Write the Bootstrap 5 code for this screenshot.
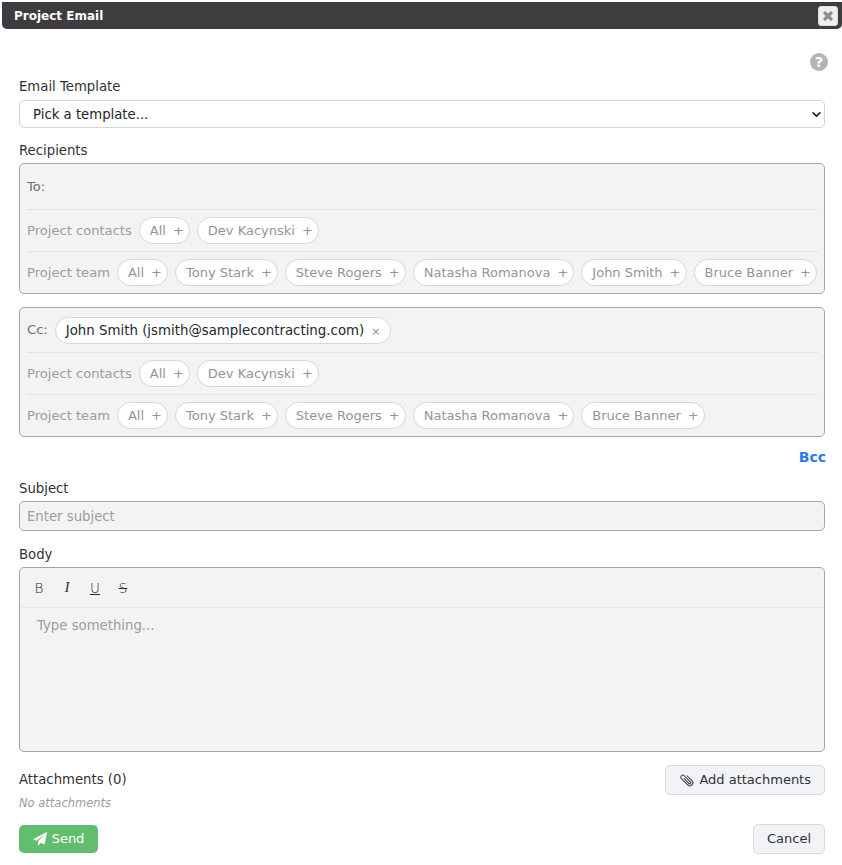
<!DOCTYPE html>
<html lang="en">
<head>
  <meta charset="UTF-8" />
  <title>Project Email</title>
  <link href="https://cdn.jsdelivr.net/npm/bootstrap@5.3.3/dist/css/bootstrap.min.css" rel="stylesheet" />
  <style>
    body {
      font-family: "DejaVu Sans", Verdana, sans-serif;
      font-size: 13.25px;
      color: #2f3136;
      background: #fff;
      overflow: hidden;
    }
    .title-bar {
      margin: 2px 0 0 2px;
      height: 27px;
      padding: 0 4px 0 12px;
      background: #3e3c3f;
      color: #fff;
      font-size: 12px;
      font-weight: 700;
      border-radius: 0 0 5px 5px;
    }
    .close-btn {
      width: 20px;
      height: 20px;
      padding: 0;
      border: 1px solid #ddd;
      border-radius: 3px;
      background: #eeeeee;
      line-height: 1;
    }
    .dialog-body { padding: 24px 17px 0 19px; }
    .help-icon {
      width: 18px;
      height: 18px;
      margin-right: -3px;
      border-radius: 50%;
      background: #b4b4b4;
      color: #fff;
      font-size: 14px;
      font-weight: 700;
      line-height: 18px;
      text-align: center;
    }
    .field-label { margin: 0 0 5px; padding-top: 1px; line-height: 16px; color: #2f3136; }
    .field-label-low { margin-bottom: 4px; padding-top: 2px; }
    .template-select {
      height: 28px;
      padding: 2px 30px 0 13px;
      font-size: 13.25px;
      color: #212529;
      border-color: #d3d4d8;
      border-radius: 5px;
      background-image: url("data:image/svg+xml,%3csvg xmlns='http://www.w3.org/2000/svg' viewBox='0 0 16 16'%3e%3cpath fill='none' stroke='%23212529' stroke-linecap='round' stroke-linejoin='round' stroke-width='3' d='m2 5 6 6 6-6'/%3e%3c/svg%3e");
      background-size: 9px 9px;
      background-position: right 3px center;
    }
    .recipient-box {
      padding: 0 6px 0 7px;
      background: #f3f3f3;
      border: 1px solid #a5a6a8;
      border-radius: 5px;
    }
    .recipient-row {
      height: 42px;
      gap: 7px;
      color: #9a9ca6;
      border-top: 1px solid #e4e4e6;
    }
    .recipient-row.first-row { height: 45px; border-top: 0; color: #6a6d78; }
    .recipient-row.cc-row { height: 44px; }
    .recipient-row > .row-label { white-space: nowrap; font-size: 13.1px; }
    .chip {
      height: 27px;
      padding: 0 5px 0 10px;
      background: #fff;
      border: 1px solid #d6d7da;
      border-radius: 14px;
      color: #92949f;
      font-size: 13px;
      line-height: 25px;
      white-space: nowrap;
    }
    .chip .chip-sign { margin-left: 7px; }
    .chip-picked { color: #24262b; padding: 0 10px; font-size: 13.35px; }
    .chip-picked .chip-sign { font-size: 11px; color: #8b8d96; margin-left: 7px; }
    .bcc-link {
      display: block;
      margin-top: 12px;
      margin-right: -1px;
      line-height: 17px;
      color: #2b7de9;
      font-size: 14px;
      font-weight: 700;
      text-align: right;
      text-decoration: none;
    }
    .subject-input {
      height: 30px;
      padding: 0 7px;
      font-size: 13.25px;
      background: #f3f3f3;
      border-color: #a5a6a8;
      border-radius: 5px;
    }
    .subject-input::placeholder { color: #9a9ca6; }
    .editor-box {
      height: 185px;
      background: #f3f3f3;
      border: 1px solid #a5a6a8;
      border-radius: 5px;
    }
    .editor-tools {
      height: 40px;
      padding: 0 0 0 12px;
      gap: 14px;
      border-bottom: 1px solid #e8e8e9;
    }
    .tool-btn {
      width: 14px;
      padding: 0;
      border: 0;
      background: none;
      color: #26282c;
      font-family: "DejaVu Sans", sans-serif;
      font-weight: 200;
      font-size: 13.5px;
      line-height: 16px;
      text-align: center;
    }
    .tool-italic { font-family: "Liberation Serif", serif; font-style: italic; font-size: 14px; }
    .tool-under { text-decoration: underline; }
    .tool-strike { text-decoration: line-through; }
    .editor-text { padding: 9px 17px; color: #9a9ca6; line-height: 18px; }
    .attach-row { margin-top: 13px; }
    .attach-title { padding-top: 7px; line-height: 16px; }
    .attach-empty { margin-top: 7px; line-height: 16px; font-size: 11.5px; font-style: italic; color: #9a9ca6; }
    .soft-btn {
      height: 30px;
      padding: 0 13px;
      font-size: 13px;
      color: #2f3136;
      background: #f2f3f7;
      border: 1px solid #d8d9dd;
      border-radius: 5px;
    }
    .send-btn {
      height: 28px;
      width: 79px;
      padding: 0;
      gap: 5px;
      font-size: 13px;
      color: #fff;
      background: #62bd6e;
      border: 0;
      border-radius: 5px;
    }
    .foot-row { margin-top: 13px; }
  </style>
</head>
<body>

  <!-- Title bar -->
  <div class="title-bar d-flex align-items-center justify-content-between">
    <span>Project Email</span>
    <button type="button" class="close-btn d-flex align-items-center justify-content-center" aria-label="Close">
      <svg width="12" height="12" viewBox="0 0 12 12"><path d="M3 3l6 6M9 3l-6 6" stroke="#8f8f8f" stroke-width="3.2" stroke-linecap="round"/></svg>
    </button>
  </div>

  <div class="dialog-body">
    <div class="d-flex justify-content-end"><div class="help-icon">?</div></div>

    <div class="field-label" style="margin-top:7px">Email Template</div>
    <select class="form-select template-select">
      <option>Pick a template...</option>
    </select>

    <div class="field-label" style="margin-top:14px;margin-bottom:4px">Recipients</div>

    <!-- To -->
    <div class="recipient-box">
      <div class="recipient-row first-row d-flex align-items-center"><span class="row-label">To:</span></div>
      <div class="recipient-row d-flex align-items-center">
        <span class="row-label">Project contacts</span>
        <span class="chip">All<span class="chip-sign">+</span></span>
        <span class="chip">Dev Kacynski<span class="chip-sign">+</span></span>
      </div>
      <div class="recipient-row d-flex align-items-center">
        <span class="row-label">Project team</span>
        <span class="chip">All<span class="chip-sign">+</span></span>
        <span class="chip">Tony Stark<span class="chip-sign">+</span></span>
        <span class="chip">Steve Rogers<span class="chip-sign">+</span></span>
        <span class="chip">Natasha Romanova<span class="chip-sign">+</span></span>
        <span class="chip">John Smith<span class="chip-sign">+</span></span>
        <span class="chip">Bruce Banner<span class="chip-sign">+</span></span>
      </div>
    </div>

    <!-- Cc -->
    <div class="recipient-box" style="margin-top:13px">
      <div class="recipient-row first-row cc-row d-flex align-items-center">
        <span class="row-label">Cc:</span>
        <span class="chip chip-picked">John Smith (jsmith@samplecontracting.com)<span class="chip-sign">×</span></span>
      </div>
      <div class="recipient-row d-flex align-items-center">
        <span class="row-label">Project contacts</span>
        <span class="chip">All<span class="chip-sign">+</span></span>
        <span class="chip">Dev Kacynski<span class="chip-sign">+</span></span>
      </div>
      <div class="recipient-row d-flex align-items-center">
        <span class="row-label">Project team</span>
        <span class="chip">All<span class="chip-sign">+</span></span>
        <span class="chip">Tony Stark<span class="chip-sign">+</span></span>
        <span class="chip">Steve Rogers<span class="chip-sign">+</span></span>
        <span class="chip">Natasha Romanova<span class="chip-sign">+</span></span>
        <span class="chip">Bruce Banner<span class="chip-sign">+</span></span>
      </div>
    </div>

    <a class="bcc-link" href="#">Bcc</a>

    <div class="field-label field-label-low" style="margin-top:13px">Subject</div>
    <input type="text" class="form-control subject-input" placeholder="Enter subject" />

    <div class="field-label field-label-low" style="margin-top:14px">Body</div>
    <div class="editor-box">
      <div class="editor-tools d-flex align-items-center">
        <button type="button" class="tool-btn">B</button>
        <button type="button" class="tool-btn tool-italic">I</button>
        <button type="button" class="tool-btn tool-under">U</button>
        <button type="button" class="tool-btn tool-strike">S</button>
      </div>
      <div class="editor-text">Type something...</div>
    </div>

    <!-- Attachments -->
    <div class="attach-row d-flex justify-content-between align-items-start">
      <div>
        <div class="attach-title">Attachments (0)</div>
        <div class="attach-empty">No attachments</div>
      </div>
      <button type="button" class="btn soft-btn d-flex align-items-center gap-1">
        <svg width="16" height="16" viewBox="0 0 16 16" fill="#3a3c42"><path transform="rotate(-45 8 8)" d="M4.5 3a2.5 2.5 0 0 1 5 0v9a1.5 1.5 0 0 1-3 0V5a.5.5 0 0 1 1 0v7a.5.5 0 0 0 1 0V3a1.5 1.5 0 1 0-3 0v9a2.5 2.5 0 0 0 5 0V5a.5.5 0 0 1 1 0v7a3.5 3.5 0 1 1-7 0V3z"/></svg>
        Add attachments
      </button>
    </div>

    <div class="foot-row d-flex justify-content-between align-items-center">
      <button type="button" class="btn send-btn d-flex align-items-center justify-content-center">
        <svg width="14" height="14" viewBox="0 0 14 14" fill="#fff"><path d="M14 0L11.6 12.6 7.6 10.8 5.4 14 5 9.6 11.6 2.6 3.6 8.8 0 7.2z"/></svg>
        Send
      </button>
      <button type="button" class="btn soft-btn">Cancel</button>
    </div>
  </div>

  <script src="https://cdn.jsdelivr.net/npm/bootstrap@5.3.3/dist/js/bootstrap.bundle.min.js"></script>
</body>
</html>
